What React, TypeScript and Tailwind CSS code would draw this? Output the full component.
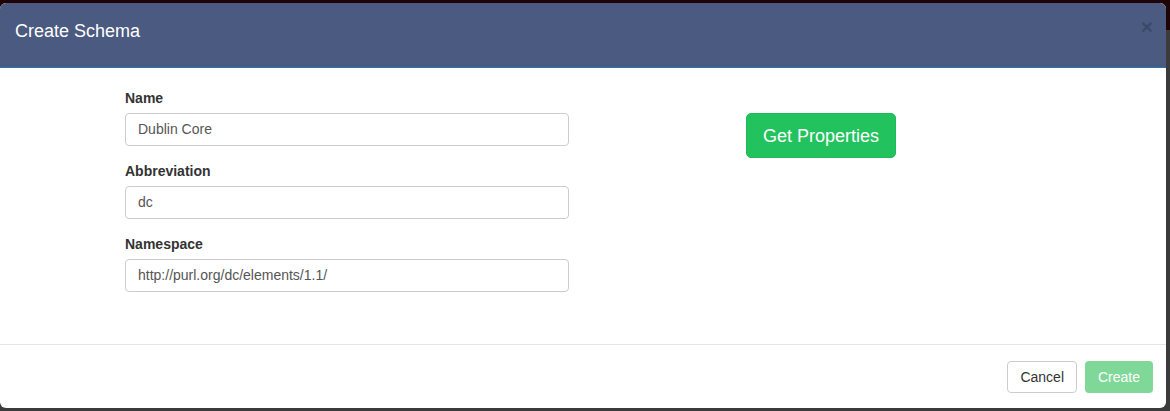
import React from "react";

export default function App() {
  const font = { fontFamily: '"Liberation Sans", Arial, Helvetica, sans-serif' };
  return (
    <div className="relative w-[1170px] h-[411px] overflow-hidden bg-[#3b3b3b]" style={font}>
      {/* background page top bar, mostly hidden behind the modal */}
      <div className="absolute left-0 top-0 w-full h-[30px] bg-[#1e0406] overflow-hidden">
        <div className="absolute top-[-15px] left-[968px] flex gap-[40px] text-[15px] leading-[18px] text-[#6b5a5c]">
          <span>Hours</span>
          <span>Libraries</span>
          <span>Ask Us</span>
        </div>
      </div>
      {/* modal */}
      <div className="relative mt-[3px] w-[1166px] h-[405px] bg-white rounded-[6px] flex flex-col overflow-hidden">
        <div className="h-[65px] bg-[#4b5a80] border-b border-[#2d73b4] flex items-start justify-between pl-[15px] pr-[13px] pt-[16px]">
          <h4 className="text-[18px] leading-[24px] text-white">Create Schema</h4>
          <span className="text-[21px] font-bold leading-[20px] -mt-[2px] text-[#3c4867]">×</span>
        </div>
        <div className="flex-1 flex pl-[125px] pt-[20px]">
          <div className="w-[444px] flex flex-col">
            {[
              ["Name", "Dublin Core"],
              ["Abbreviation", "dc"],
              ["Namespace", "http://purl.org/dc/elements/1.1/"],
            ].map(([label, value], i) => (
              <div key={label} className={i < 2 ? "mb-[15px]" : ""}>
                <div className="text-[14px] font-bold leading-[20px] text-[#333] mb-[5px]">{label}</div>
                <div className="h-[33px] border border-[#cccccc] rounded-[4px] px-[12px] flex items-center text-[14px] text-[#555]">
                  {value}
                </div>
              </div>
            ))}
          </div>
          <div className="ml-[177px] mt-[25px]">
            <button className="h-[45px] px-[16px] rounded-[5px] bg-[#22c35e] border border-[#1fb957] text-white text-[18px] leading-[24px]">
              Get Properties
            </button>
          </div>
        </div>
        <div className="h-[64px] border-t border-[#e5e5e5] flex items-start justify-end gap-[8px] pt-[16px] pr-[13px]">
          <button className="h-[32px] px-[12px] rounded-[4px] border border-[#cccccc] bg-white text-[14px] text-[#333]">
            Cancel
          </button>
          <button className="h-[32px] w-[68px] rounded-[4px] bg-[#7fd898] text-[14px] text-white">
            Create
          </button>
        </div>
      </div>
    </div>
  );
}
